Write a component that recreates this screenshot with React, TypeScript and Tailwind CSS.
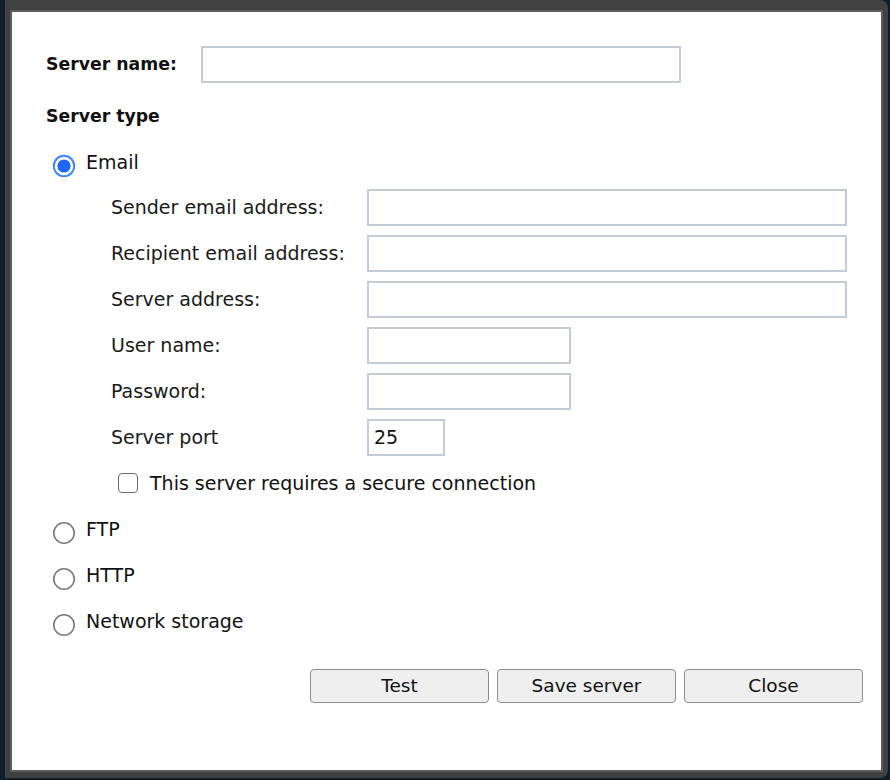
import React from "react";

const font = { fontFamily: '"DejaVu Sans", "Liberation Sans", sans-serif' };

const Radio = ({ checked }: { checked?: boolean }) => (
  <svg width="24" height="24" viewBox="0 0 24 24" className="shrink-0">
    {checked ? (
      <>
        <circle cx="12" cy="12" r="10.2" fill="#fff" stroke="#3f86f7" strokeWidth="2" />
        <circle cx="12" cy="12" r="6.6" fill="#1d68fb" />
      </>
    ) : (
      <circle cx="12" cy="12" r="10.2" fill="#fff" stroke="#7a7a7a" strokeWidth="1.6" />
    )}
  </svg>
);

const Field = ({ label, width, value }: { label: string; width: string; value?: string }) => (
  <div className="flex items-center h-[46px]">
    <div className="w-[256px] shrink-0 text-[#1a1a1a]">{label}</div>
    <div
      className={`${width} h-[37px] border-2 border-[#c4ccda] bg-white flex items-center px-[5px] text-[#111]`}
    >
      {value}
    </div>
  </div>
);

const Option = ({ label, checked }: { label: string; checked?: boolean }) => (
  <div className="flex items-center h-[46px] pl-[6px]">
    <div className="pt-[4px]">
      <Radio checked={checked} />
    </div>
    <div className="ml-[10px] pb-[4px] text-[#111]">{label}</div>
  </div>
);

const Button = ({ children }: { children: React.ReactNode }) => (
  <button className="w-[179px] h-[34px] rounded-[4px] border border-[#8c8c8c] bg-[#efefef] text-[#111] text-[18.5px] leading-none">
    {children}
  </button>
);

export default function App() {
  return (
    <div className="w-[890px] h-[780px] bg-[#0e1e2c] pl-[5px] overflow-hidden" style={font}>
      <div className="w-[883px] h-[778px] bg-[#414141] rounded-r-[8px] pt-[10px] pl-[5px] pr-[5px] pb-[6px]">
        <div className="w-full h-full bg-white border-2 border-[#5e5e5e] text-[19px] flex flex-col">
          <div className="pl-[34px] pt-[34px]">
            <div className="flex items-center h-[37px]">
              <div className="w-[155px] font-bold text-[17.3px] text-[#111]">Server name:</div>
              <div className="w-[480px] h-[37px] border-2 border-[#c4ccda]" />
            </div>

            <div className="mt-[22px] h-[24px] flex items-center font-bold text-[17.3px] text-[#111]">
              Server type
            </div>

            <div className="mt-[12px]">
              <Option label="Email" checked />
            </div>

            <div className="pl-[65px] mt-[-3px]">
              <Field label="Sender email address:" width="w-[480px]" />
              <Field label="Recipient email address:" width="w-[480px]" />
              <Field label="Server address:" width="w-[480px]" />
              <Field label="User name:" width="w-[204px]" />
              <Field label="Password:" width="w-[204px]" />
              <Field label="Server port" width="w-[78px]" value="25" />
              <div className="flex items-center h-[46px] pl-[7px]">
                <div className="w-[20px] h-[20px] rounded-[4px] border-[1.5px] border-[#6e6e6e] bg-white" />
                <div className="ml-[12px] text-[#111]">This server requires a secure connection</div>
              </div>
            </div>

            <div className="mt-[2px]">
              <Option label="FTP" />
              <Option label="HTTP" />
              <Option label="Network storage" />
            </div>
          </div>

          <div className="flex justify-end gap-[8px] pr-[18px] mt-[23px]">
            <Button>Test</Button>
            <Button>Save server</Button>
            <Button>Close</Button>
          </div>
        </div>
      </div>
    </div>
  );
}
